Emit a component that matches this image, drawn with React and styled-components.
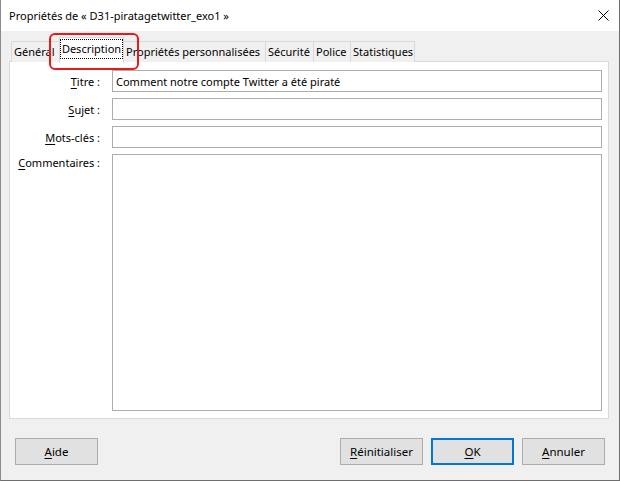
import React from 'react'
import styled, { createGlobalStyle } from 'styled-components'

const Global = createGlobalStyle`
  html, body {
    margin: 0;
    padding: 0;
    background: #f0f0f0;
  }
  * {
    box-sizing: border-box;
  }
`

const Window = styled.div`
  position: relative;
  width: 620px;
  height: 481px;
  background: #f0f0f0;
  border-left: 1px solid #8c8c8c;
  border-right: 1px solid #6e6e6e;
  border-bottom: 1px solid #6e6e6e;
  font-family: "Noto Sans", "Open Sans", sans-serif;
  font-size: 11px;
  color: #000;
  display: flex;
  flex-direction: column;
`

const TitleBar = styled.div`
  height: 31px;
  background: #fff;
  display: flex;
  align-items: center;
  padding: 0 0 0 8px;
  font-size: 11px;
`

const TitleText = styled.div`
  flex: 1;
`

const Close = styled.div`
  width: 46px;
  height: 31px;
  display: flex;
  align-items: center;
  justify-content: center;
  margin-right: -7px;
`

const Body = styled.div`
  flex: 1;
  display: flex;
  flex-direction: column;
  padding: 10px 10px 0 8px;
`

const TabRow = styled.div`
  display: flex;
  align-items: flex-end;
  height: 21px;
  padding-left: 2px;
  position: relative;
  z-index: 1;
`

const Tab = styled.div`
  width: ${p => p.$w}px;
  height: 21px;
  background: #f0f0f0;
  border: 1px solid #d9d9d9;
  border-bottom: none;
  border-right: none;
  display: flex;
  align-items: center;
  justify-content: flex-start;
  white-space: nowrap;
  overflow: hidden;
  padding: 0 0 1px ${p => p.$pad}px;

  &:last-child {
    border-right: 1px solid #d9d9d9;
  }
`

const ActiveTab = styled.div`
  width: ${p => p.$w + 4}px;
  height: 26px;
  margin: 0 -2px -1px -2px;
  background: #fff;
  border: 1px solid #d9d9d9;
  border-bottom: none;
  display: flex;
  align-items: center;
  justify-content: center;
  position: relative;
  z-index: 2;
  white-space: nowrap;
  padding-bottom: 3px;
`

const Focus = styled.span`
  outline: 1px dotted #000;
  outline-offset: 0;
  padding: 1px 1px 2px;
`

const Panel = styled.div`
  height: 358px;
  margin-top: -1px;
  background: #fff;
  border: 1px solid #d9d9d9;
  display: grid;
  grid-template-columns: 90px 1fr;
  grid-template-rows: 22px 22px 22px 1fr;
  column-gap: 12px;
  row-gap: 6px;
  padding: 8px 6px 7px 0;
`

const Label = styled.div`
  text-align: right;
  white-space: nowrap;
  padding-top: ${p => (p.$top ? '1px' : '0')};
  display: flex;
  justify-content: flex-end;
  align-items: ${p => (p.$top ? 'flex-start' : 'center')};
`

const Key = styled.span`
  text-decoration: underline;
  text-underline-offset: 2px;
`

const Field = styled.input`
  height: 22px;
  width: 100%;
  border: 1px solid #adadad;
  background: #fff;
  padding: 0 3px;
  font: inherit;
  color: #000;
  outline: none;
`

const Area = styled.textarea`
  width: 100%;
  height: 100%;
  border: 1px solid #adadad;
  background: #fff;
  font: inherit;
  resize: none;
  outline: none;
`

const ButtonRow = styled.div`
  display: flex;
  gap: 8px;
  margin-top: 19px;
  padding: 0 4px 0 6px;
`

const Spacer = styled.div`
  flex: 1;
`

const Button = styled.div`
  width: 83px;
  height: 27px;
  background: #e1e1e1;
  border: ${p => (p.$default ? '2px solid #0078d7' : '1px solid #adadad')};
  display: flex;
  align-items: center;
  justify-content: center;
  font-size: 11.5px;
`

const Mark = styled.div`
  position: absolute;
  left: 48px;
  top: 33px;
  width: 90px;
  height: 37px;
  border: 2px solid #e8191b;
  border-radius: 6px;
  z-index: 5;
  pointer-events: none;
`

const tabs = [
  { label: 'Général', w: 50, pad: 2 },
  { label: 'Description', w: 61, active: true },
  { label: 'Propriétés personnalisées', w: 143, pad: 3 },
  { label: 'Sécurité', w: 48, pad: 2 },
  { label: 'Police', w: 37, pad: 2 },
  { label: 'Statistiques', w: 65, pad: 2 },
]

const App = () => {
  return (
    <Window>
      <Global />
      <TitleBar>
        <TitleText>Propriétés de « D31-piratagetwitter_exo1 »</TitleText>
        <Close>
          <svg width="11" height="11" viewBox="0 0 11 11">
            <path d="M0.5 0.5 L10.5 10.5 M10.5 0.5 L0.5 10.5" stroke="#000" strokeWidth="1" />
          </svg>
        </Close>
      </TitleBar>
      <Body>
        <TabRow>
          {tabs.map(t =>
            t.active ? (
              <ActiveTab key={t.label} $w={t.w}>
                <Focus>{t.label}</Focus>
              </ActiveTab>
            ) : (
              <Tab key={t.label} $w={t.w} $pad={t.pad}>{t.label}</Tab>
            )
          )}
        </TabRow>
        <Panel>
          <Label><Key>T</Key>itre :</Label>
          <Field defaultValue="Comment notre compte Twitter a été piraté" readOnly />
          <Label><Key>S</Key>ujet :</Label>
          <Field readOnly />
          <Label><Key>M</Key>ots-clés :</Label>
          <Field readOnly />
          <Label $top><Key>C</Key>ommentaires :</Label>
          <Area readOnly />
        </Panel>
        <ButtonRow>
          <Button><span><Key>A</Key>ide</span></Button>
          <Spacer />
          <Button><span><Key>R</Key>éinitialiser</span></Button>
          <Button $default><span><Key>O</Key>K</span></Button>
          <Button><span><Key>A</Key>nnuler</span></Button>
        </ButtonRow>
      </Body>
      <Mark />
    </Window>
  )
}

export default App
